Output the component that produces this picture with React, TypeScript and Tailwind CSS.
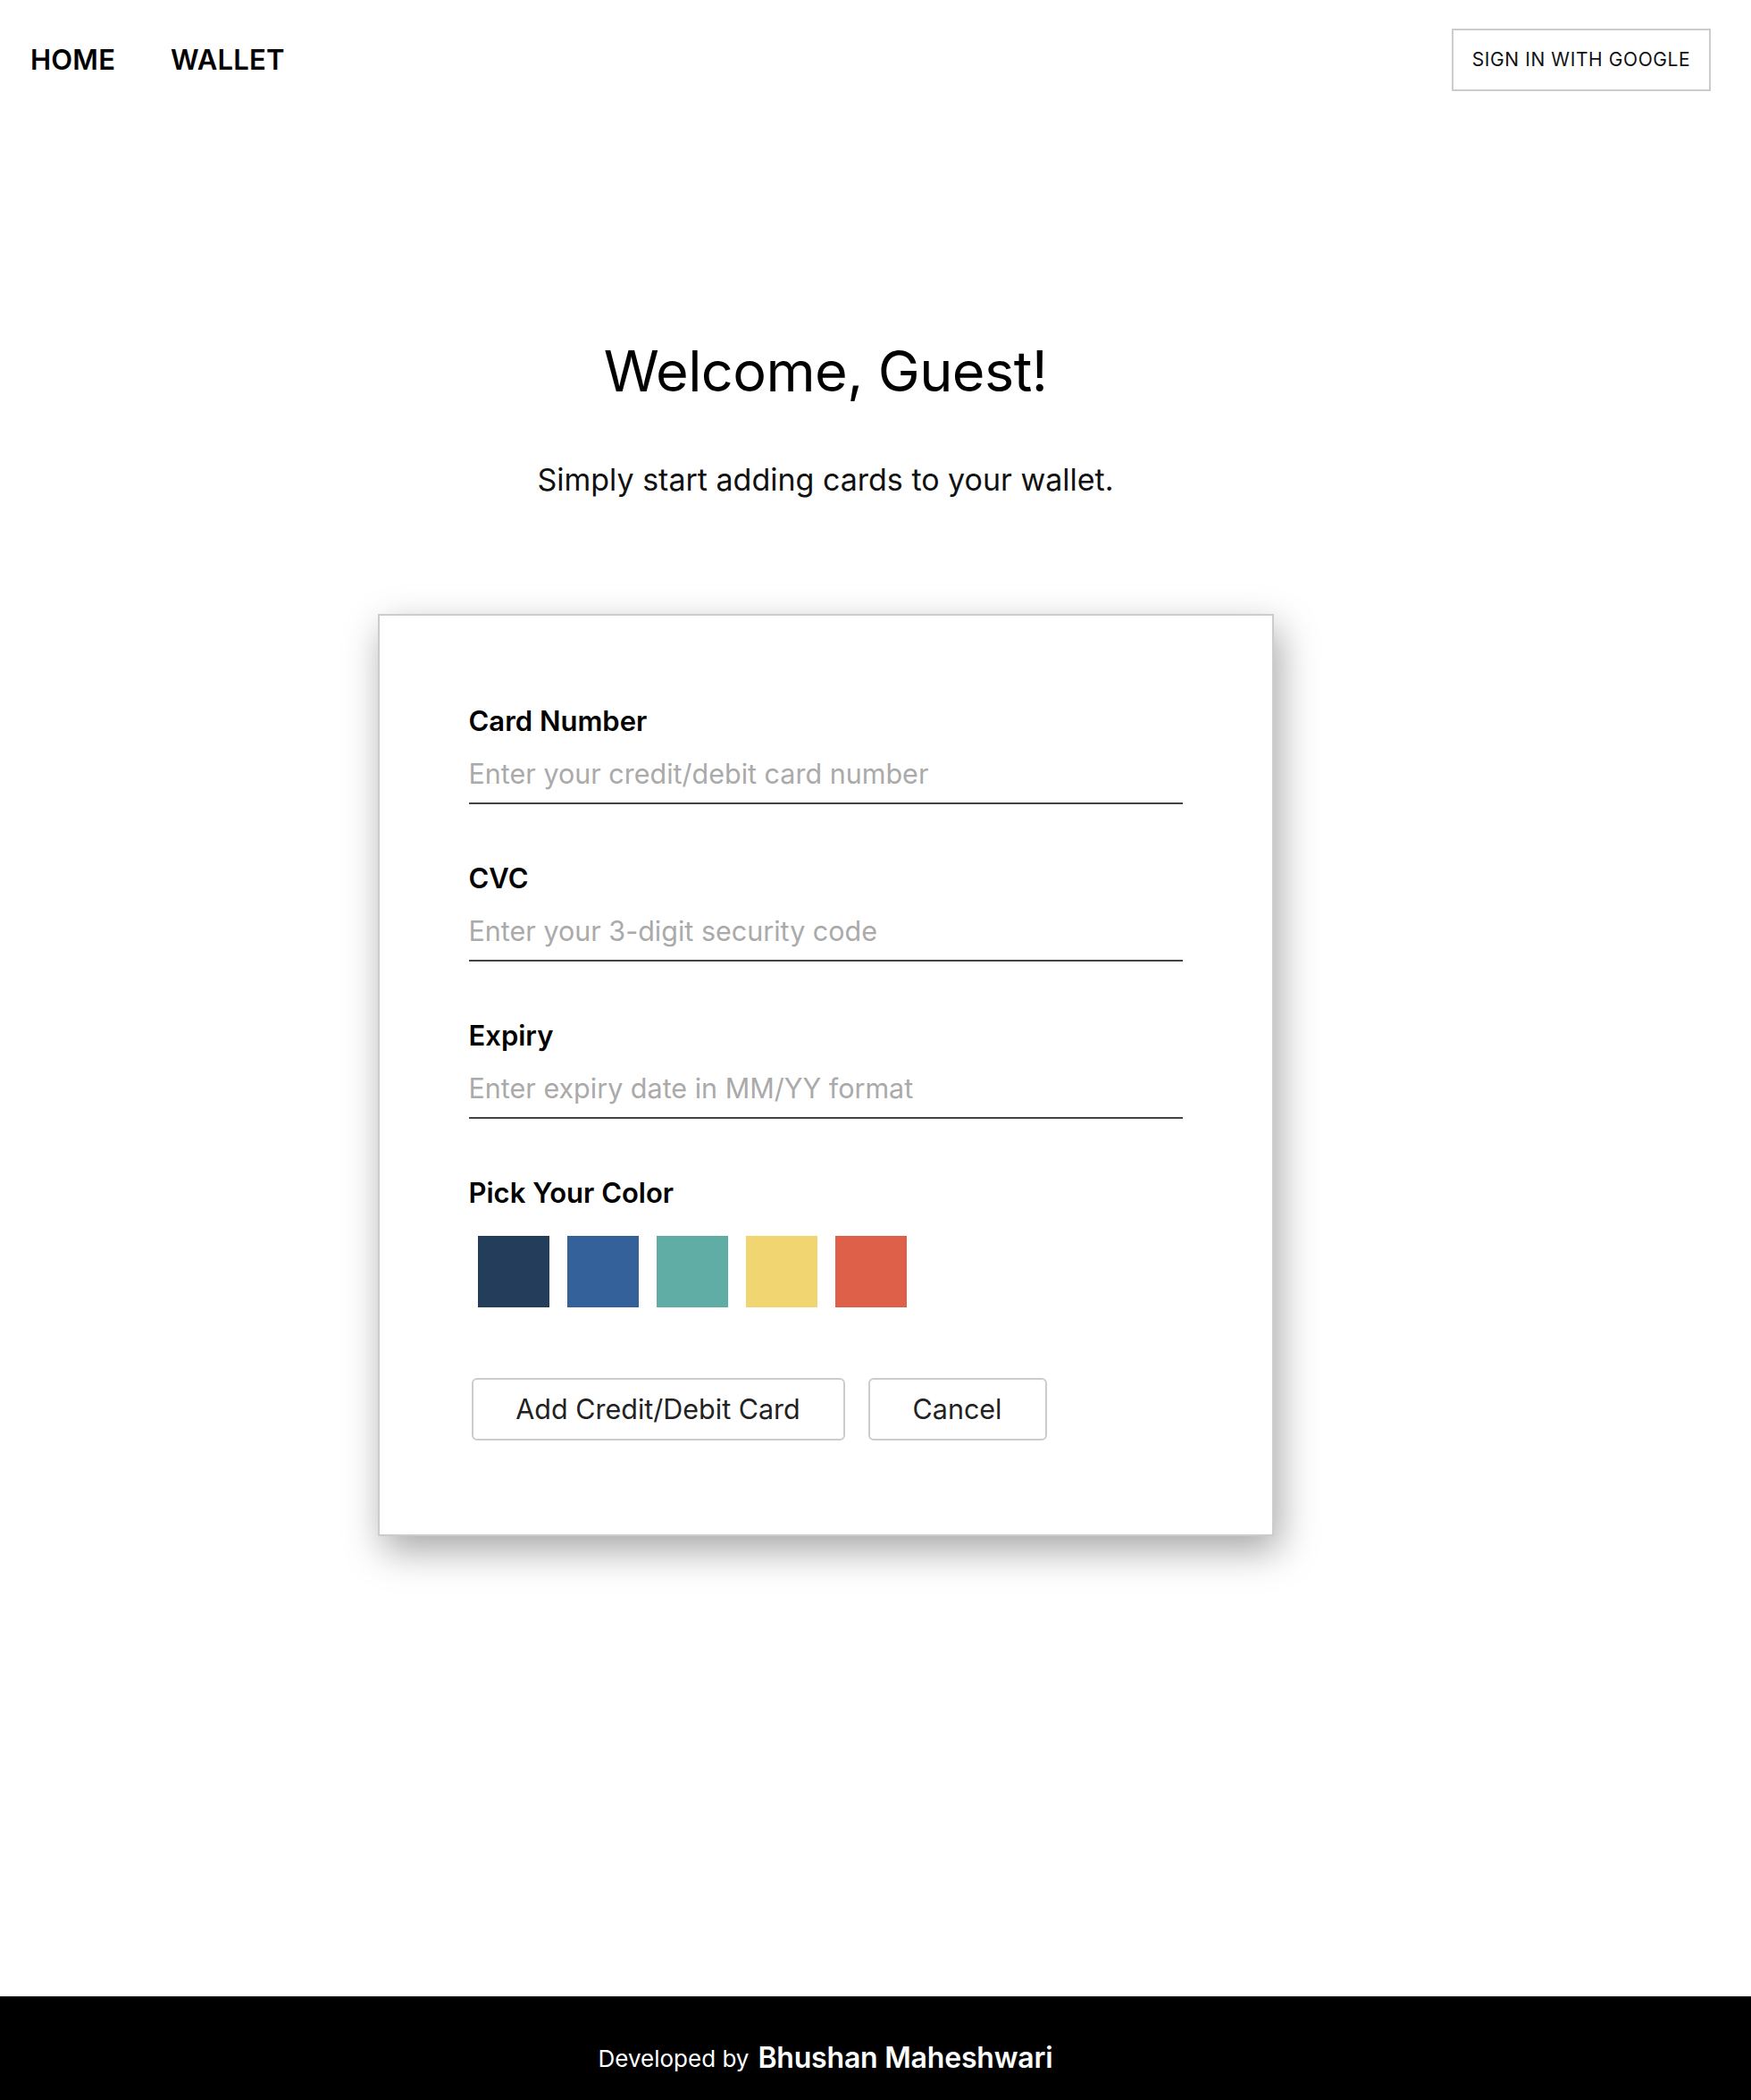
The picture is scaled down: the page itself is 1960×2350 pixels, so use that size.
import { useState } from "react";

const colors = ["#233d5b", "#34619a", "#5fada4", "#f1d570", "#de6048"];

const fields = [
  { label: "Card Number", placeholder: "Enter your credit/debit card number" },
  { label: "CVC", placeholder: "Enter your 3-digit security code" },
  { label: "Expiry", placeholder: "Enter expiry date in MM/YY format" },
];

export default function App() {
  const [picked, setPicked] = useState<string | null>(null);

  return (
    <div
      className="min-h-screen flex flex-col bg-white text-black"
      style={{ fontFamily: "Inter, 'Noto Sans', sans-serif" }}
    >
      {/* Nav */}
      <nav className="h-[134px] flex items-center justify-between pl-[34px] pr-[45px]">
        <div className="flex items-center gap-[62px] text-[31px] font-semibold tracking-[0.2px]">
          <a href="#">HOME</a>
          <a href="#">WALLET</a>
        </div>
        <button className="h-[70px] w-[290px] border-2 border-[#cccccc] bg-white text-[21px] tracking-[0.6px] text-[#111]">
          SIGN IN WITH GOOGLE
        </button>
      </nav>

      {/* Main */}
      <main className="flex flex-col items-center pr-[112px]">
        <h1 className="mt-[241px] text-[63px] leading-[80px] font-normal tracking-[-0.6px]">
          Welcome, Guest!
        </h1>
        <p className="mt-[58px] text-[34px] leading-[48px] text-[#111]">
          Simply start adding cards to your wallet.
        </p>

        {/* Card form */}
        <div className="mt-[126px] w-[1003px] border-2 border-[#cccccc] bg-white pt-[100px] pb-[105px] px-[100px] shadow-[6px_16px_40px_rgba(0,0,0,0.35)]">
          {fields.map((f) => (
            <div key={f.label} className="mb-[65px]">
              <label className="block text-[31px] leading-[36px] font-semibold">{f.label}</label>
              <input
                type="text"
                placeholder={f.placeholder}
                className="mt-[13px] block w-full h-[62px] pb-[6px] border-b-2 border-[#444] bg-transparent text-[30.5px] outline-none placeholder:text-[#aaaaaa]"
              />
            </div>
          ))}

          <label className="block text-[31px] leading-[36px] font-semibold">Pick Your Color</label>
          <div className="mt-[30px] flex">
            {colors.map((c) => (
              <button
                key={c}
                onClick={() => setPicked(c)}
                className={`mx-[10px] h-[80px] w-[80px] ${picked === c ? "ring-4 ring-black/30" : ""}`}
                style={{ backgroundColor: c }}
              />
            ))}
          </div>

          <div className="mt-[79px] flex gap-[26px] pl-[3px]">
            <button className="h-[70px] w-[418px] rounded-[6px] border-2 border-[#cccccc] bg-white text-[30.5px] text-[#222]">
              Add Credit/Debit Card
            </button>
            <button className="h-[70px] w-[200px] rounded-[6px] border-2 border-[#cccccc] bg-white text-[30.5px] text-[#222]">
              Cancel
            </button>
          </div>
        </div>
      </main>

      {/* Footer */}
      <footer className="mt-auto h-[116px] pt-[22px] bg-black text-white flex items-center justify-center pr-[112px]">
        <span className="text-[26px]">Developed by</span>
        <span className="ml-[10px] text-[32px] font-semibold tracking-[-0.2px]">Bhushan Maheshwari</span>
      </footer>
    </div>
  );
}
